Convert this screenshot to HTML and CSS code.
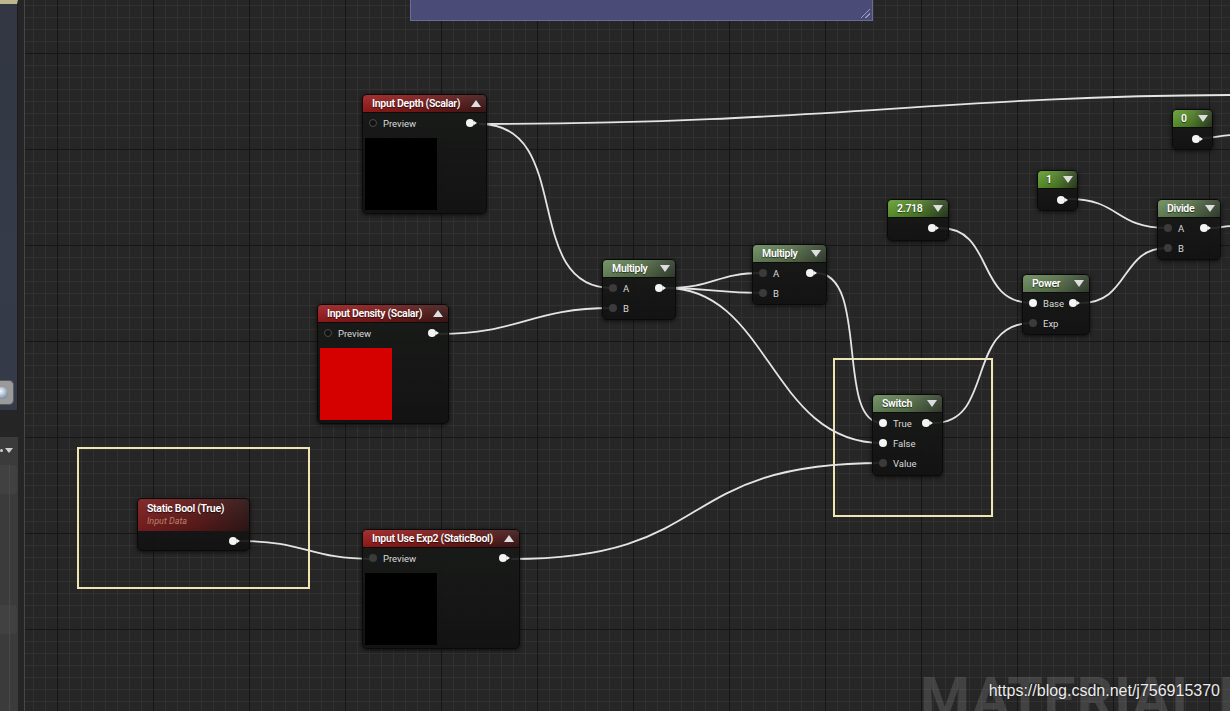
FILE: index.html
```html
<!DOCTYPE html>
<html>
<head>
<meta charset="utf-8">
<link rel="stylesheet" href="styles.css">
</head>
<body>
<div class="side">
  <div class="viewport">
    <div class="vbtn"><span class="sphere"></span></div>
  </div>
  <div class="gap"></div>
  <div class="panel">
    <div class="dd"><span class="dot"></span><span class="ddtri"></span></div>
    <div class="pbox"></div>
    <div class="pline"></div>
    <div class="pbox pbox2"></div>
  </div>
</div>

<div class="canvas">
  <div class="comment"><span class="grip"></span></div>

  <div class="watermark">MATERIAL EDITOR</div>

  <div class="sel sel-a"></div>
  <div class="sel sel-b"></div>

  <svg class="wires" viewBox="25 0 1205 711" width="1205" height="711">
    <g fill="none" stroke="#e4e4e4" stroke-width="1.8" stroke-linecap="round">
      <path d="M480,124 C820,124 940,96 1232,95"/>
      <path d="M480,124 C575,124 520,288 612,288"/>
      <path d="M440,334 C520,334 530,308 612,308"/>
      <path d="M666,288 C715,288 715,273 762,273"/>
      <path d="M666,288 C715,288 715,293 762,293"/>
      <path d="M666,288 C770,288 770,443 882,443"/>
      <path d="M816,273 C870,273 835,423 882,423"/>
      <path d="M512,559 C720,559 670,463 882,463"/>
      <path d="M241,541 C305,541 310,559 372,559"/>
      <path d="M934,423 C995,423 965,323 1032,323"/>
      <path d="M940,228 C995,228 975,303 1032,303"/>
      <path d="M1069,199 C1120,199 1115,228 1167,228"/>
      <path d="M1081,303 C1130,303 1120,248 1167,248"/>
      <path d="M1204,138 C1215,138 1220,135 1232,135"/>
      <path d="M1212,228 C1220,228 1224,226 1232,226"/>
    </g>
  </svg>

  <!-- Input Depth -->
  <div class="node n-depth">
    <div class="hdr red"><span class="ttl">Input Depth (Scalar)</span><span class="tri up"></span></div>
    <div class="row"><span class="pin hollow"></span><span class="lbl">Preview</span><span class="pin out"></span></div>
    <div class="thumb black"></div>
  </div>

  <!-- Input Density -->
  <div class="node n-density">
    <div class="hdr red"><span class="ttl">Input Density (Scalar)</span><span class="tri up"></span></div>
    <div class="row"><span class="pin hollow"></span><span class="lbl">Preview</span><span class="pin out"></span></div>
    <div class="thumb redfill"></div>
  </div>

  <!-- Input Use Exp2 -->
  <div class="node n-exp2">
    <div class="hdr red"><span class="ttl">Input Use Exp2 (StaticBool)</span><span class="tri up"></span></div>
    <div class="row"><span class="pin dark"></span><span class="lbl">Preview</span><span class="pin out"></span></div>
    <div class="thumb black"></div>
  </div>

  <!-- Static Bool -->
  <div class="node n-sbool">
    <div class="hdr2">
      <span class="ttl">Static Bool (True)</span>
      <span class="sub">Input Data</span>
    </div>
    <div class="row"><span class="pin out"></span></div>
  </div>

  <!-- Multiply 1 -->
  <div class="node n-mul1">
    <div class="hdr green"><span class="ttl">Multiply</span><span class="tri down"></span></div>
    <div class="row"><span class="pin dark"></span><span class="lbl">A</span><span class="pin out"></span></div>
    <div class="row"><span class="pin dark"></span><span class="lbl">B</span></div>
  </div>

  <!-- Multiply 2 -->
  <div class="node n-mul2">
    <div class="hdr green"><span class="ttl">Multiply</span><span class="tri down"></span></div>
    <div class="row"><span class="pin dark"></span><span class="lbl">A</span><span class="pin out"></span></div>
    <div class="row"><span class="pin dark"></span><span class="lbl">B</span></div>
  </div>

  <!-- Switch -->
  <div class="node n-switch">
    <div class="hdr green"><span class="ttl">Switch</span><span class="tri down"></span></div>
    <div class="row"><span class="pin"></span><span class="lbl">True</span><span class="pin out"></span></div>
    <div class="row"><span class="pin"></span><span class="lbl">False</span></div>
    <div class="row"><span class="pin dark"></span><span class="lbl">Value</span></div>
  </div>

  <!-- 2.718 -->
  <div class="node n-e">
    <div class="hdr const"><span class="ttl">2.718</span><span class="tri down"></span></div>
    <div class="row"><span class="pin out"></span></div>
  </div>

  <!-- 1 -->
  <div class="node n-one">
    <div class="hdr const"><span class="ttl">1</span><span class="tri down"></span></div>
    <div class="row"><span class="pin out"></span></div>
  </div>

  <!-- 0 -->
  <div class="node n-zero">
    <div class="hdr const"><span class="ttl">0</span><span class="tri down"></span></div>
    <div class="row"><span class="pin out"></span></div>
  </div>

  <!-- Divide -->
  <div class="node n-div">
    <div class="hdr green"><span class="ttl">Divide</span><span class="tri down"></span></div>
    <div class="row"><span class="pin dark"></span><span class="lbl">A</span><span class="pin out"></span></div>
    <div class="row"><span class="pin dark"></span><span class="lbl">B</span></div>
  </div>

  <!-- Power -->
  <div class="node n-pow">
    <div class="hdr green"><span class="ttl">Power</span><span class="tri down"></span></div>
    <div class="row"><span class="pin"></span><span class="lbl">Base</span><span class="pin out"></span></div>
    <div class="row"><span class="pin dark"></span><span class="lbl">Exp</span></div>
  </div>

  <div class="url">https://blog.csdn.net/j756915370</div>
</div>
</body>
</html>
```

FILE: styles.css
```css
* { box-sizing: border-box; }
html, body {
  margin: 0;
  padding: 0;
}
body {
  width: 1230px;
  height: 711px;
  overflow: hidden;
  display: flex;
  background: #262626;
  font-family: Roboto, "Liberation Sans", sans-serif;
}

/* ---------- left editor strip ---------- */
.side {
  width: 25px;
  flex: none;
  display: flex;
  flex-direction: column;
  background: #252525;
  border-right: 1px solid #474747;
}
.viewport {
  width: 18px;
  height: 410px;
  flex: none;
  position: relative;
  border-top: 4px solid #bdb58f;
  border-right: 1px solid #1c1c1c;
  background: linear-gradient(170deg, #313642 0%, #353b48 60%, #343a47 100%);
}
.vbtn {
  position: absolute;
  left: 0;
  top: 376px;
  width: 14px;
  height: 25px;
  border-radius: 0 5px 5px 0;
  background: #9a9a9a;
  border: 1px solid #5a5a5a;
  border-left: none;
}
.sphere {
  position: absolute;
  left: -4px;
  top: 6px;
  width: 12px;
  height: 12px;
  border-radius: 50%;
  background: radial-gradient(circle at 40% 35%, #f4f8ff 0%, #a9b8cc 45%, #56606e 100%);
}
.gap {
  height: 27px;
  flex: none;
}
.panel {
  flex: 1;
  width: 18px;
  background: #3b3b3b;
  position: relative;
}
.dd {
  height: 26px;
  display: flex;
  align-items: center;
  gap: 2px;
}
.dot {
  width: 3px;
  height: 3px;
  border-radius: 50%;
  background: #cfcfcf;
}
.ddtri {
  width: 0;
  height: 0;
  border-left: 4px solid transparent;
  border-right: 4px solid transparent;
  border-top: 5px solid #cfcfcf;
}
.pbox {
  width: 17px;
  height: 29px;
  margin-top: 2px;
  background: #414141;
  border-radius: 0 4px 4px 0;
}
.pline {
  position: absolute;
  left: 9px;
  top: 28px;
  bottom: 0;
  width: 1px;
  background: #4a4a4a;
}
.pbox2 {
  margin-top: 111px;
}

/* ---------- graph canvas ---------- */
.canvas {
  flex: 1;
  position: relative;
  overflow: hidden;
  background-color: #262626;
  background-image:
    linear-gradient(to right, #161616 1px, transparent 1px),
    linear-gradient(to bottom, #161616 1px, transparent 1px),
    linear-gradient(to right, #313131 1px, transparent 1px),
    linear-gradient(to bottom, #313131 1px, transparent 1px);
  background-size: 96px 96px, 96px 96px, 12px 12px, 12px 12px;
  background-position: 32px 53px, 32px 53px, 8px 5px, 8px 5px;
}

.comment {
  position: absolute;
  left: 385px;
  top: 0;
  width: 463px;
  height: 21px;
  background: #4b4b78;
  border: 1px solid #6b6b96;
  border-top: none;
}
.grip {
  position: absolute;
  right: 2px;
  bottom: 2px;
  width: 9px;
  height: 9px;
  background: linear-gradient(135deg, transparent 45%, #9a9ac0 45%, #9a9ac0 55%, transparent 55%, transparent 70%, #9a9ac0 70%, #9a9ac0 80%, transparent 80%);
}

.watermark {
  position: absolute;
  left: 895px;
  top: 670px;
  font-family: Roboto, "Liberation Sans", sans-serif;
  font-weight: 700;
  font-size: 57px;
  line-height: 57px;
  letter-spacing: 1px;
  white-space: nowrap;
  color: rgba(255, 255, 255, 0.13);
}

.url {
  position: absolute;
  right: 10px;
  top: 681px;
  font-family: "Liberation Sans", Arial, sans-serif;
  font-size: 16px;
  line-height: 19px;
  color: #ececec;
  text-shadow: 0 0 2px rgba(0, 0, 0, 0.6);
  white-space: nowrap;
}

.sel {
  position: absolute;
  border: 2px solid #efe4b2;
}
.sel-a { left: 52px; top: 447px; width: 233px; height: 142px; }
.sel-b { left: 808px; top: 358px; width: 160px; height: 159px; }

.wires {
  position: absolute;
  left: 0;
  top: 0;
}

/* ---------- nodes ---------- */
.node {
  position: absolute;
  background: linear-gradient(to bottom, rgba(24, 26, 24, 0.9), rgba(16, 17, 16, 0.92));
  border: 1px solid #0a0a0a;
  border-radius: 5px;
  box-shadow: 0 1px 4px rgba(0, 0, 0, 0.7);
  color: #ffffff;
}
.hdr {
  height: 18px;
  display: flex;
  align-items: center;
  justify-content: space-between;
  padding: 0 5px 0 9px;
  border-radius: 4px 4px 0 0;
  border-bottom: 1px solid #0c0c0c;
}
.ttl {
  font-size: 10.5px;
  font-weight: 600;
  letter-spacing: -0.3px;
  white-space: nowrap;
  text-shadow: 0 1px 1px rgba(0, 0, 0, 0.6);
}
.red {
  background: linear-gradient(to bottom, rgba(255, 255, 255, 0.1), rgba(0, 0, 0, 0.1)),
              linear-gradient(to right, #9b1a1a 0%, #7a1616 45%, #3c1717 100%);
}
.green {
  background: linear-gradient(to bottom, rgba(255, 255, 255, 0.08), rgba(0, 0, 0, 0.12)),
              linear-gradient(to right, #6d8c5d 0%, #59744c 50%, #364132 100%);
}
.const {
  background: linear-gradient(to bottom, rgba(255, 255, 255, 0.1), rgba(0, 0, 0, 0.12)),
              linear-gradient(to right, #619d2d 0%, #4d7d25 50%, #2b3d22 100%);
}
.tri {
  width: 0;
  height: 0;
  border-left: 5px solid transparent;
  border-right: 5px solid transparent;
}
.tri.up { border-bottom: 7px solid #dedede; }
.tri.down { border-top: 7px solid #dedede; }

.hdr2 {
  height: 32px;
  display: flex;
  flex-direction: column;
  padding: 3px 0 0 9px;
  border-radius: 4px 4px 0 0;
  background: linear-gradient(to bottom, rgba(255, 255, 255, 0.06), rgba(0, 0, 0, 0.1)),
              linear-gradient(to right, #7e1e1e 0%, #5e1919 50%, #2f1616 100%);
}
.hdr2 .ttl { line-height: 13px; }
.sub {
  font-size: 9px;
  font-style: italic;
  line-height: 13px;
  color: #b9806f;
}

.row {
  height: 20px;
  display: flex;
  align-items: center;
  padding-left: 6px;
}
.lbl {
  font-size: 9.5px;
  color: #dadada;
  margin-left: 6px;
  white-space: nowrap;
}
.pin {
  width: 8px;
  height: 8px;
  flex: none;
  border-radius: 50%;
  background: #f4f4f4;
}
.pin.dark { background: #3b3b3b; }
.pin.hollow {
  background: #121212;
  border: 1px solid #4a4a4a;
}
.pin.out {
  margin-left: auto;
  margin-right: 12px;
  position: relative;
}
.pin.out::after {
  content: "";
  position: absolute;
  left: 8px;
  top: 2px;
  border-top: 2px solid transparent;
  border-bottom: 2px solid transparent;
  border-left: 3px solid #f4f4f4;
}

.thumb {
  width: 72px;
  height: 72px;
  margin: 5px 0 0 2px;
}
.black { background: #000000; }
.redfill { background: #d50000; }

.n-depth   { left: 337px; top: 94px;  width: 125px; height: 120px; }
.n-density { left: 292px; top: 304px; width: 132px; height: 120px; }
.n-exp2    { left: 337px; top: 529px; width: 158px; height: 120px; }
.n-sbool   { left: 112px; top: 498px; width: 113px; height: 53px; }
.n-sbool .row { height: 20px; }
.n-mul1    { left: 577px; top: 259px; width: 74px; height: 61px; }
.n-mul2    { left: 727px; top: 244px; width: 75px; height: 61px; }
.n-switch  { left: 847px; top: 394px; width: 71px; height: 82px; }
.n-e       { left: 862px; top: 199px; width: 62px; height: 42px; }
.n-one     { left: 1012px; top: 170px; width: 41px; height: 41px; }
.n-zero    { left: 1147px; top: 109px; width: 41px; height: 41px; }
.n-div     { left: 1132px; top: 199px; width: 64px; height: 61px; }
.n-pow     { left: 997px; top: 274px; width: 68px; height: 61px; }

.n-one .hdr, .n-zero .hdr { padding: 0 4px 0 8px; }
.n-one .row, .n-zero .row { height: 21px; }
```
